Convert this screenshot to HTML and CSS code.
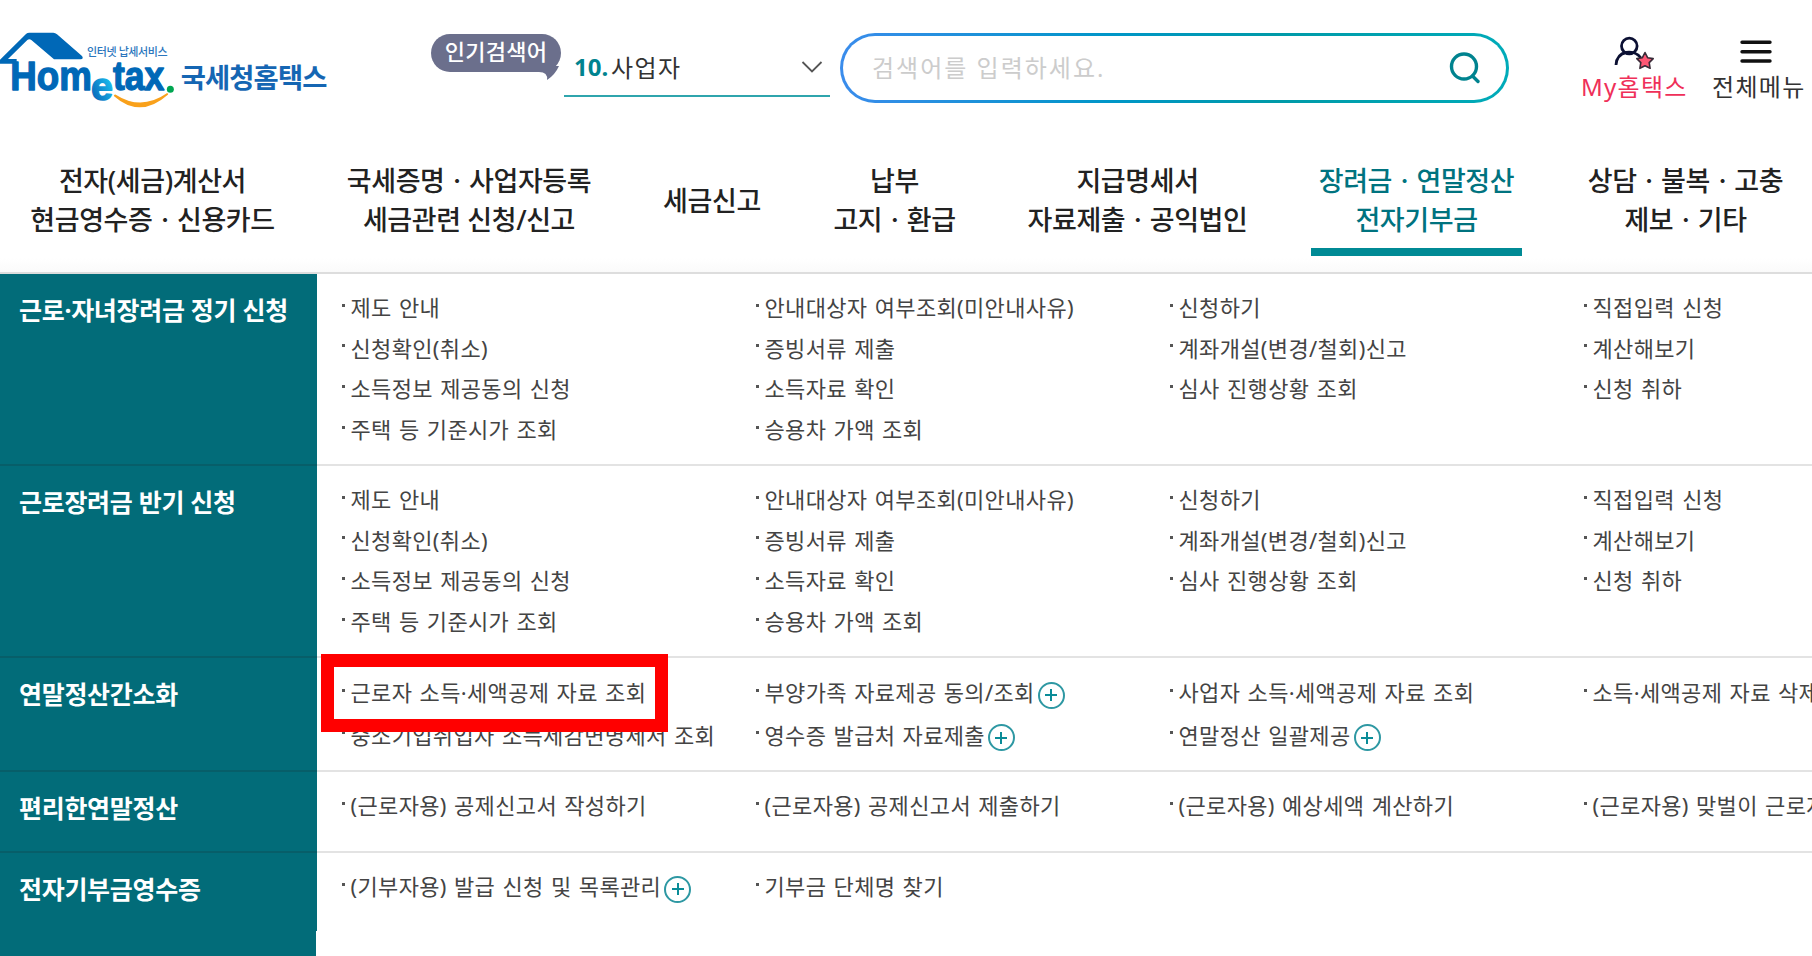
FILE: index.html
```
<!DOCTYPE html>
<html lang="ko">
<head>
    <meta charset="UTF-8">
    <meta name="viewport" content="width=device-width, initial-scale=1.0">
    <title>국세청 홈택스</title>
    <link rel="stylesheet" href="styles.css">
</head>
<body>
    <header class="header">
        <a class="logo">
            <svg width="340" height="100" viewBox="0 0 1020 300">
                <defs>
                    <linearGradient id="eColor" x1="0" y1="1" x2="1" y2="0">
                        <stop offset="0.2" stop-color="#0a6ebd"/>
                        <stop offset="0.8" stop-color="#19c0f0"/>
                    </linearGradient>
                </defs>
                <path d="M0 131V119L78 42Q82 38 88 38H160Q166 38 171 43L246 108Q252 117 242 118H162L94 60Q88 55 82 60L24 117H50V131Z" fill="#0068b7"/>
                <g class="logo-en">
                    <text x="31" y="209" font-size="122" textLength="245" lengthAdjust="spacingAndGlyphs">Hom</text>
                    <text class="logo-e" x="273" y="241" font-size="118" textLength="66" lengthAdjust="spacingAndGlyphs">e</text>
                    <text x="339" y="209" font-size="122" textLength="154" lengthAdjust="spacingAndGlyphs">tax</text>
                </g>
                <circle cx="511" cy="208" r="10.500" fill="#00a651"/>
                <path d="M344 227Q420 294 502 222Q424 276 346 226Z" fill="#f9a11b" stroke="#f9a11b" stroke-width="5" stroke-linejoin="round"/>
                <text class="logo-sub" x="261" y="109" textLength="242">인터넷 납세서비스</text>
                <text class="logo-ko" x="542" y="204" textLength="440">국세청홈택스</text>
            </svg>
        </a>
        <div class="popular">
            <span class="badge">인기검색어
                <svg class="badge-tail" width="20" height="14" viewBox="0 0 20 14"><path d="M0 0H20Q16 9 8 14Q9 6 0 6Z" fill="#6b6f8c"/></svg>
            </span>
            <div class="keyword">
                <b>10.</b><span>사업자</span>
                <svg width="22" height="14" viewBox="0 0 22 14"><path d="M1.500 2L11 11.500L20.500 2" fill="none" stroke="#555" stroke-width="1.800"/></svg>
            </div>
        </div>
        <div class="search">
            <span>검색어를 입력하세요.</span>
            <svg width="34" height="34" viewBox="0 0 34 34" fill="none" stroke="#00838f" stroke-width="3.400" stroke-linecap="round"><circle cx="16" cy="15.500" r="12.500"/><path d="M24.500 25L30 30.500"/></svg>
        </div>
        <div class="util">
            <a class="my">
                <svg width="42" height="38" viewBox="0 0 42 38">
                    <g fill="none" stroke="#0b1033" stroke-width="2.800"><circle cx="17.300" cy="11" r="7.800"/><path d="M4 30C5 15 22 14 29 23"/></g>
                    <path d="M33 17.500L35.600 22.700L41.200 23.600L37.200 27.600L38.100 33.300L33 30.700L27.900 33.300L28.800 27.600L24.800 23.600L30.400 22.700Z" fill="#ff5775" stroke="#3a2b38" stroke-width="1.600" stroke-linejoin="round"/>
                </svg>
                <span>My홈택스</span>
            </a>
            <a class="all">
                <svg width="32" height="38" viewBox="0 0 32 38" stroke="#111" stroke-width="3.400" stroke-linecap="round"><path d="M2 7.300H30M2 16.700H30M2 26H30"/></svg>
                <span>전체메뉴</span>
            </a>
        </div>
    </header>

    <nav class="gnb">
        <a>전자(세금)계산서<br>현금영수증ㆍ신용카드</a>
        <a>국세증명ㆍ사업자등록<br>세금관련 신청/신고</a>
        <a>세금신고</a>
        <a>납부<br>고지ㆍ환급</a>
        <a>지급명세서<br>자료제출ㆍ공익법인</a>
        <a class="active">장려금ㆍ연말정산<br>전자기부금</a>
        <a>상담ㆍ불복ㆍ고충<br>제보ㆍ기타</a>
    </nav>

    <main class="menu">
        <section class="row row-tall">
            <h2>근로·자녀장려금 정기 신청</h2>
            <ul>
                <li>제도 안내</li>
                <li>안내대상자 여부조회(미안내사유)</li>
                <li>신청하기</li>
                <li>직접입력 신청</li>
                <li>신청확인(취소)</li>
                <li>증빙서류 제출</li>
                <li>계좌개설(변경/철회)신고</li>
                <li>계산해보기</li>
                <li>소득정보 제공동의 신청</li>
                <li>소득자료 확인</li>
                <li>심사 진행상황 조회</li>
                <li>신청 취하</li>
                <li>주택 등 기준시가 조회</li>
                <li>승용차 가액 조회</li>
            </ul>
        </section>
        <section class="row row-tall">
            <h2>근로장려금 반기 신청</h2>
            <ul>
                <li>제도 안내</li>
                <li>안내대상자 여부조회(미안내사유)</li>
                <li>신청하기</li>
                <li>직접입력 신청</li>
                <li>신청확인(취소)</li>
                <li>증빙서류 제출</li>
                <li>계좌개설(변경/철회)신고</li>
                <li>계산해보기</li>
                <li>소득정보 제공동의 신청</li>
                <li>소득자료 확인</li>
                <li>심사 진행상황 조회</li>
                <li>신청 취하</li>
                <li>주택 등 기준시가 조회</li>
                <li>승용차 가액 조회</li>
            </ul>
        </section>
        <section class="row row-year">
            <h2>연말정산간소화</h2>
            <ul>
                <li class="marked">근로자 소득·세액공제 자료 조회</li>
                <li>부양가족 자료제공 동의/조회<i class="plus"></i></li>
                <li>사업자 소득·세액공제 자료 조회</li>
                <li>소득·세액공제 자료 삭제</li>
                <li>중소기업취업자 소득세감면명세서 조회</li>
                <li>영수증 발급처 자료제출<i class="plus"></i></li>
                <li>연말정산 일괄제공<i class="plus"></i></li>
            </ul>
        </section>
        <section class="row row-easy">
            <h2>편리한연말정산</h2>
            <ul>
                <li>(근로자용) 공제신고서 작성하기</li>
                <li>(근로자용) 공제신고서 제출하기</li>
                <li>(근로자용) 예상세액 계산하기</li>
                <li>(근로자용) 맞벌이 근로자</li>
            </ul>
        </section>
        <section class="row row-last">
            <h2>전자기부금영수증</h2>
            <ul>
                <li>(기부자용) 발급 신청 및 목록관리<i class="plus"></i></li>
                <li>기부금 단체명 찾기</li>
            </ul>
        </section>
        <div class="menu-end"></div>
    </main>
</body>
</html>
```
FILE: styles.css
```
*, *::before, *::after {
    box-sizing: border-box;
}
body {
    margin: 0;
    width: 1812px;
    height: 956px;
    overflow: hidden;
    background: #fff;
    color: #333;
    font-family: "Noto Sans", "Noto Sans CJK KR", sans-serif;
}
.header {
    display: flex;
    align-items: flex-start;
    height: 150px;
    padding-top: 20px;
}
.logo {
    width: 431px;
}
.logo svg {
    display: block;
}
.logo-en {
    font-family: "Liberation Sans", sans-serif;
    font-weight: bold;
    fill: #0068b7;
    stroke: #0068b7;
    stroke-width: 4;
    stroke-linejoin: round;
}
.logo-e {
    fill: url(#eColor);
    stroke: url(#eColor);
}
.logo-sub {
    font-size: 33px;
    font-weight: 500;
    fill: #2b76bd;
}
.logo-ko {
    font-size: 82px;
    font-weight: bold;
    fill: #1566b3;
}
.popular {
    display: flex;
    width: 409px;
}
.badge {
    position: relative;
    width: 130px;
    height: 38px;
    margin-top: 14px;
    border-radius: 19px;
    background: #6b6f8c;
    color: #fff;
    font-size: 22px;
    font-weight: 500;
    line-height: 35px;
    letter-spacing: 0.3px;
    text-align: center;
}
.badge-tail {
    position: absolute;
    right: 2px;
    bottom: -8px;
}
.keyword {
    display: flex;
    align-items: center;
    width: 266px;
    height: 77px;
    margin-left: 3px;
    padding: 18px 7px 0 10px;
    border-bottom: 2px solid #2fa5ad;
    font-size: 24px;
}
.keyword b {
    width: 37px;
    color: #00838f;
}
.keyword span {
    flex: 1;
    letter-spacing: 1.4px;
}
.search {
    display: flex;
    align-items: center;
    justify-content: space-between;
    width: 669px;
    height: 70px;
    margin-top: 13px;
    padding: 0 24px 0 29px;
    border: 3px solid transparent;
    border-radius: 35px;
    background: linear-gradient(#fff, #fff) padding-box, linear-gradient(90deg, #3a8cec, #0096c8 40%, #009aa8 65%, #00abb9) border-box;
    color: #ccc;
    font-size: 24px;
    letter-spacing: 2px;
}
.search span {
    padding-bottom: 4px;
}
.util {
    display: flex;
    margin-left: 72px;
    padding-top: 15px;
    font-size: 24px;
    line-height: 32px;
    letter-spacing: 1.3px;
    white-space: nowrap;
}
.util a {
    display: flex;
    flex-direction: column;
}
.util span {
    margin-top: -2px;
}
.my {
    width: 131px;
    color: #ef3059;
}
.my svg {
    margin-left: 31px;
}
.all svg {
    margin-left: 28px;
}
.gnb {
    display: grid;
    grid-template-columns: 305px 328px 158px 207px 279px 279px 259px;
    height: 124px;
    border-bottom: 2px solid #ddd;
    background: linear-gradient(#fff 108px, #fafafa);
}
.gnb a {
    display: flex;
    flex-direction: column;
    justify-content: center;
    height: 100px;
    color: #222;
    font-size: 27px;
    font-weight: 500;
    line-height: 39px;
    letter-spacing: -0.4px;
    text-align: center;
    white-space: nowrap;
}
.gnb .active {
    justify-self: center;
    width: 211px;
    height: 106px;
    padding-top: 2px;
    border-bottom: 8px solid #008a95;
    color: #00737f;
}
.row {
    display: grid;
    grid-template-columns: 317px 1fr;
}
.row h2 {
    margin: 0;
    padding: 16px 0 0 19px;
    border-bottom: 2px solid #075e69;
    background: #026c79;
    color: #fff;
    font-size: 25px;
    font-weight: bold;
    line-height: 40px;
    letter-spacing: -0.3px;
    white-space: nowrap;
}
.row ul {
    display: grid;
    grid-template-columns: repeat(4, 414px);
    grid-auto-rows: 40.6px;
    align-content: start;
    margin: 0;
    padding: 12px 0 0 25px;
    border-bottom: 2px solid #e3e3e3;
    list-style: none;
    overflow: hidden;
}
.row li {
    position: relative;
    display: flex;
    align-items: center;
    color: #444;
    font-size: 22px;
    white-space: pre;
    letter-spacing: 0.35px;
    word-spacing: 1.2px;
}
.row li::before {
    content: "";
    width: 3px;
    height: 3px;
    margin: -2px 5.5px 0 0;
    background: #555;
}
.row-tall {
    height: 192px;
}
.row-year {
    height: 114px;
}
.row-year ul {
    grid-auto-rows: 42.500px;
    overflow: visible;
}
.row-easy {
    height: 81px;
}
.row-last {
    height: 78px;
}
.row-last h2,
.row-last ul {
    border-bottom: 0;
}
.menu-end {
    width: 316px;
    height: 25px;
    background: #026c79;
}
.plus {
    width: 27px;
    height: 27px;
    margin: 8px 0 0 3px;
    border: 2px solid #2e98a3;
    border-radius: 50%;
    background: linear-gradient(#0a8c98, #0a8c98) center / 12px 2px no-repeat, linear-gradient(#0a8c98, #0a8c98) center / 2px 12px no-repeat;
}
/* highlight frame over the selected link */
.marked::after {
    content: "";
    position: absolute;
    z-index: 1;
    left: -21px;
    top: -16px;
    width: 347px;
    height: 78px;
    border: 13px solid #f00;
}
```
